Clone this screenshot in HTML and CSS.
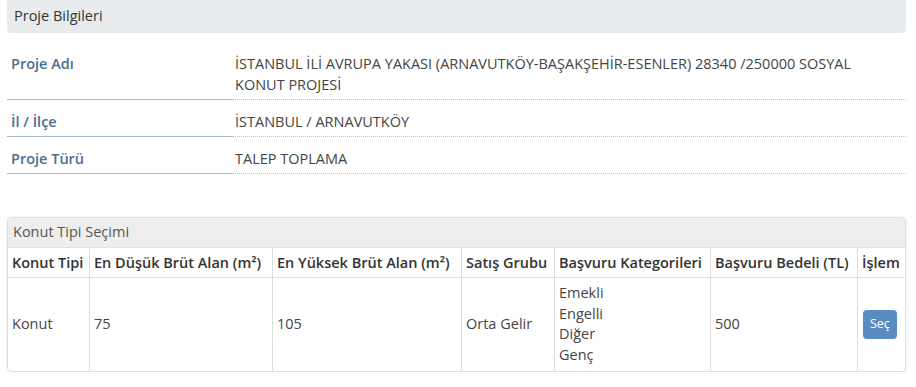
FILE: index.html
```html
<!DOCTYPE html>
<html lang="tr">
<head>
    <meta charset="UTF-8"/>
    <title>Proje Bilgileri</title>
    <link rel="stylesheet" href="styles.css">
</head>
<body>
<div class="page">
    <div class="panel-head">Proje Bilgileri</div>
    <dl class="info">
        <dt>Proje Adı</dt>
        <dd>İSTANBUL İLİ AVRUPA YAKASI (ARNAVUTKÖY-BAŞAKŞEHİR-ESENLER) 28340 /250000 SOSYAL KONUT PROJESİ</dd>
        <dt>İl / İlçe</dt>
        <dd>İSTANBUL / ARNAVUTKÖY</dd>
        <dt>Proje Türü</dt>
        <dd>TALEP TOPLAMA</dd>
    </dl>

    <div class="box">
        <div class="box-head">Konut Tipi Seçimi</div>
        <table>
            <thead>
                <tr>
                    <th class="c1">Konut Tipi</th>
                    <th class="c2">En Düşük Brüt Alan (m²)</th>
                    <th class="c3">En Yüksek Brüt Alan (m²)</th>
                    <th class="c4">Satış Grubu</th>
                    <th class="c5">Başvuru Kategorileri</th>
                    <th class="c6">Başvuru Bedeli (TL)</th>
                    <th class="c7">İşlem</th>
                </tr>
            </thead>
            <tbody>
                <tr>
                    <td>Konut</td>
                    <td>75</td>
                    <td>105</td>
                    <td>Orta Gelir</td>
                    <td>Emekli<br/>Engelli<br/>Diğer<br/>Genç</td>
                    <td>500</td>
                    <td><button class="btn">Seç</button></td>
                </tr>
            </tbody>
        </table>
    </div>
</div>
</body>
</html>
```

FILE: styles.css
```css
html {background:#fff;}
body {color:#444;font:14.5px/21px "Open Sans", sans-serif;margin:0;}
.page {padding:0 10px 0 7px;}
.panel-head {background:#e8ebee;border-radius:0 0 4px 4px;color:#333;height:33px;line-height:32px;padding:0 7px;}
.info {display:grid;grid-template-columns:226px 1fr;margin:9px 0 0;}
.info dt, .info dd {margin:0;padding:11px 0 4px;}
.info dt {border-bottom:1px solid #a8bccf;color:#4a6e92;font-weight:600;padding-left:4px;}
.info dd {border-bottom:1px dotted #b4c4d4;padding-left:2px;padding-right:20px;}
.box {border:1px solid #ddd;border-radius:4px;box-shadow:0 1px 4px rgba(0,0,0,0.08);margin-top:43px;overflow:hidden;}
.box-head {background:#eeeeee;border-bottom:1px solid #e2e2e2;color:#555;height:29px;line-height:28px;padding:0 5px;}
table {border-collapse:collapse;width:100%;}
th, td {border-left:1px solid #ddd;padding:4px 4px;text-align:left;vertical-align:middle;}
th:first-child, td:first-child {border-left:0;}
th {border-bottom:1px solid #ddd;color:#333;font-weight:600;line-height:21px;white-space:nowrap;}
td {line-height:20.5px;padding:5px 4px 6px;}
.c1 {width:73px;}
.c2 {width:174px;}
.c3 {width:180px;}
.c4 {width:84px;}
.c5 {width:147px;}
.c6 {width:138px;}
.btn {background:#5b8cc1;border:0;border-radius:4px;color:#fff;font:12.5px/1 "Open Sans", sans-serif;height:29px;margin-left:1px;padding:0 7px;}
```
